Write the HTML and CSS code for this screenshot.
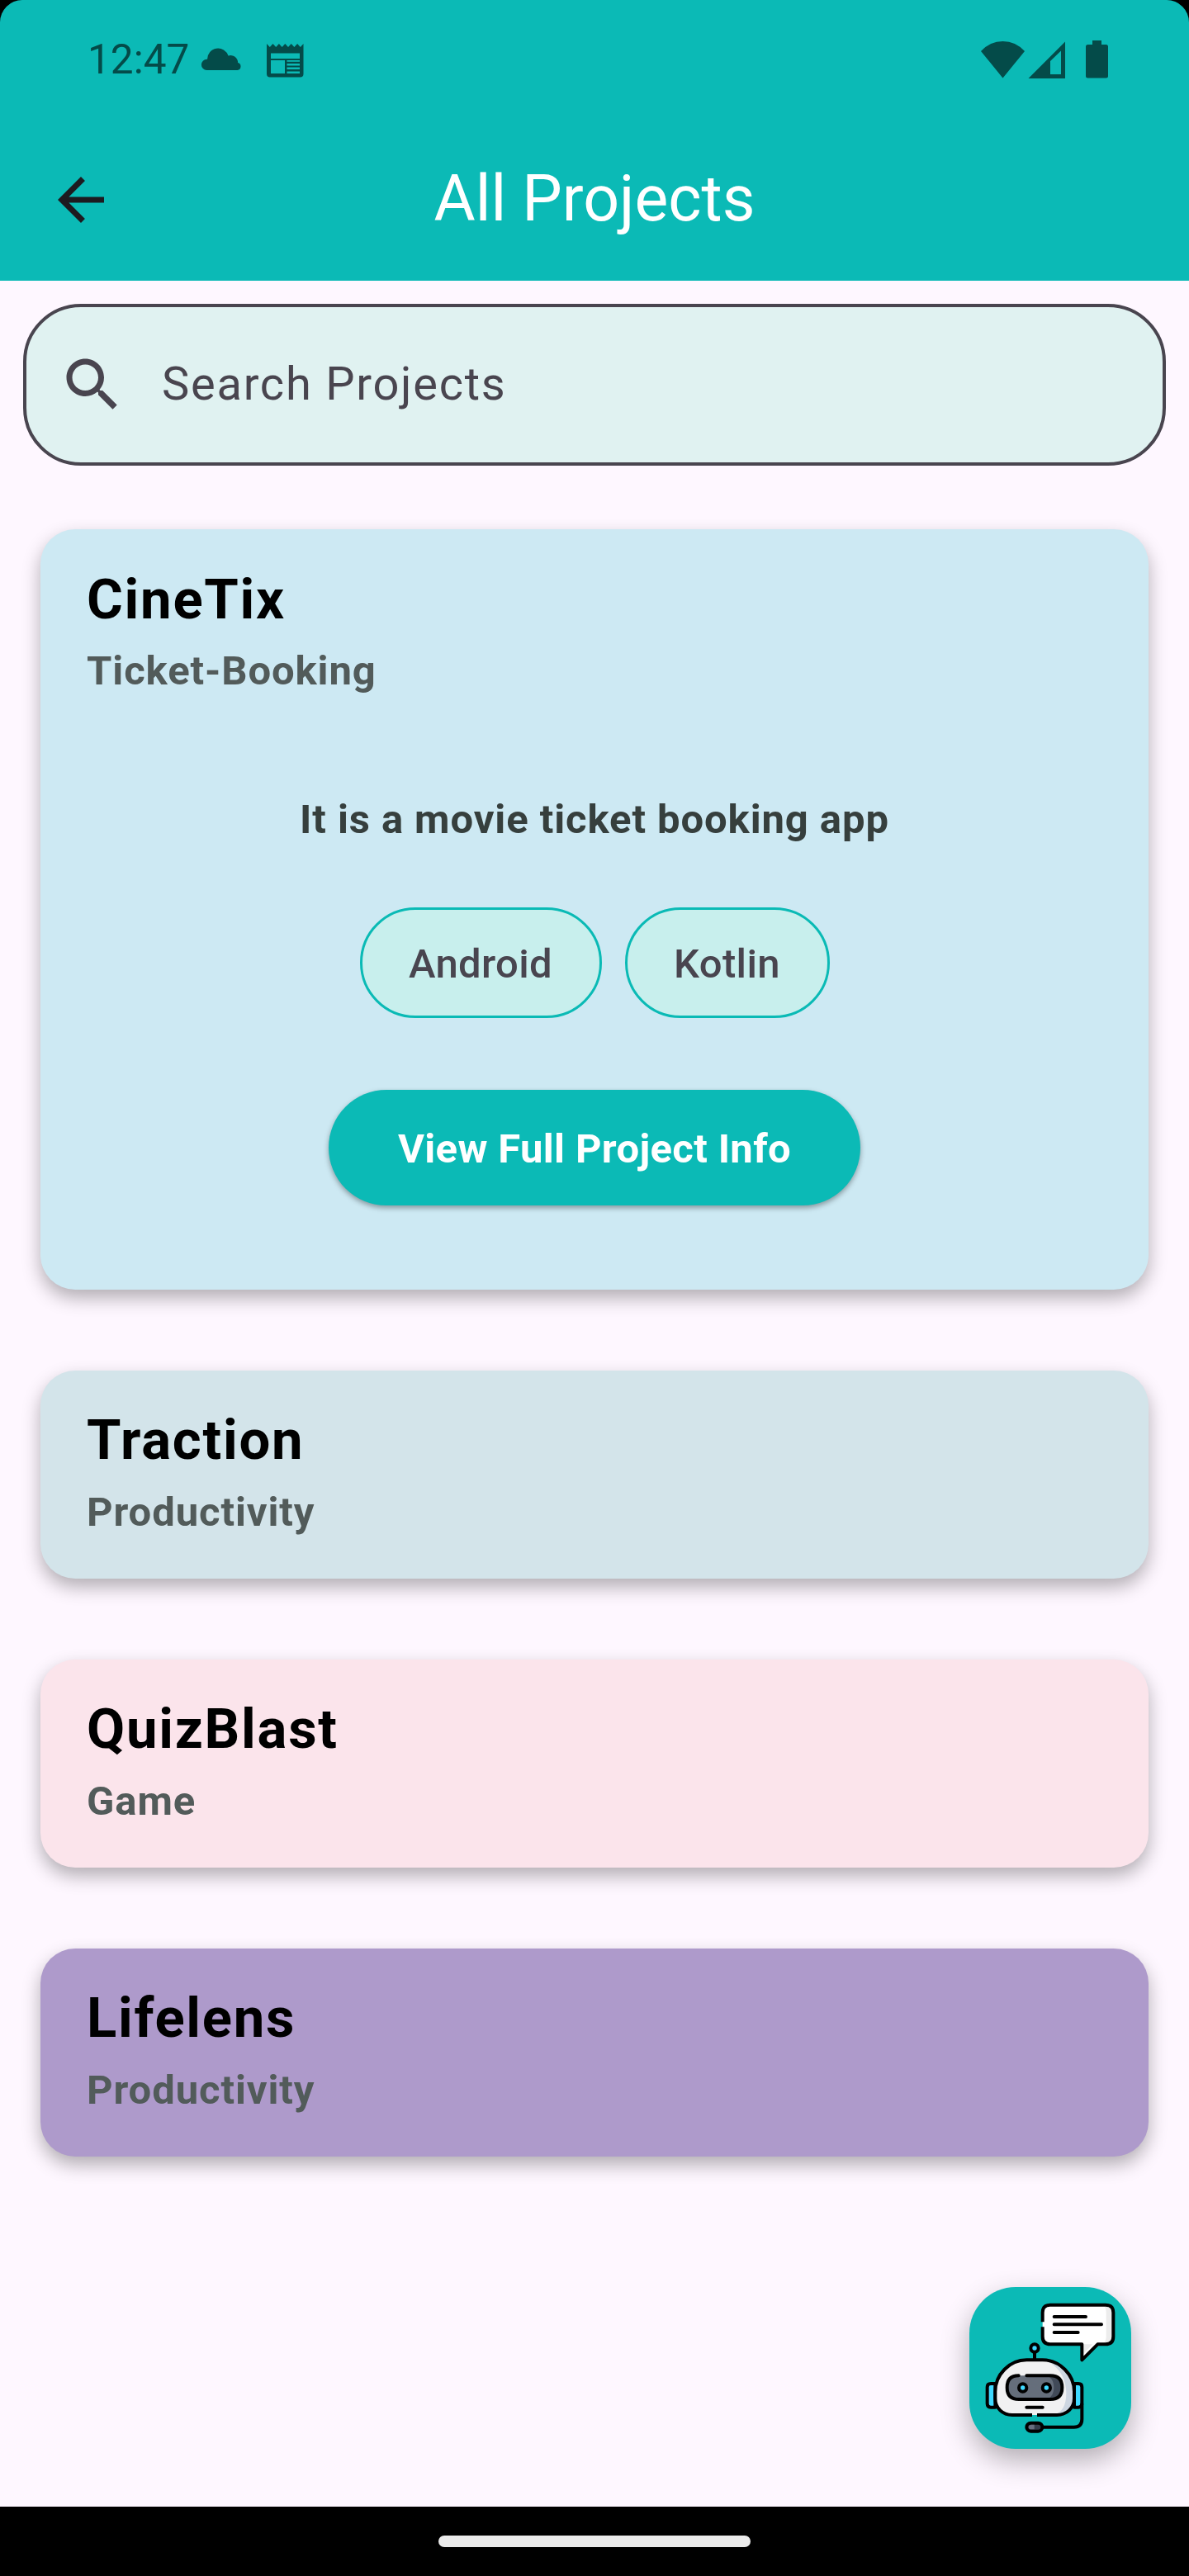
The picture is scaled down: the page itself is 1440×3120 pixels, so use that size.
FILE: index.html
```html
<!DOCTYPE html>
<html lang="en">
<head>
<meta charset="utf-8">
<title>All Projects</title>
<link rel="stylesheet" href="styles.css">
</head>
<body>
<div class="screen">
  <header class="header">
    <div class="status">
      <span class="clock">12:47</span>
      <svg class="status-left" width="135" height="54" viewBox="240 45 135 54" aria-hidden="true">
        <path d="M250.500 85a6.500 6.500 0 0 1 0-13.200q.2 0 .6 0a13 13 0 0 1 25.400-4.200 8.600 8.600 0 0 1 11.600 8.400 4.600 4.600 0 0 1-.6 9z"/>
        <path fill-rule="evenodd" d="M323 53l3.800 4 3.700-4 3.700 4 3.700-4 3.700 4 3.700-4 3.700 4 3.700-4 3.700 4 3.700-4 3.700 4 3.700-4v36.500a4 4 0 0 1-4 4h-36.500a4 4 0 0 1-4-4zM328 64.500v6.500h35v-6.500zM328 73v16h17v-16zM347.500 73v1.700H363V73zm0 4v2.500H363V77zm0 4.500V84H363v-2.500zm0 5V89H363v-2.500z"/>
      </svg>
      <svg class="status-right" width="160" height="54" viewBox="1185 45 160 54" aria-hidden="true">
        <path d="M1188 62Q1199 50 1214.500 50T1241 62L1214.500 94.500z"/>
        <path fill-rule="evenodd" d="M1245.500 95L1290 50.500V95zM1272 74v16h13V61.500z"/>
        <path d="M1323 49h11v5h5.500a2.500 2.500 0 0 1 2.500 2.500v35.500a2.500 2.500 0 0 1-2.500 2.500h-22a2.500 2.500 0 0 1-2.500-2.500V56.500a2.500 2.500 0 0 1 2.500-2.500h5.500z"/>
      </svg>
    </div>
    <div class="appbar">
      <svg class="back" width="84" height="84" viewBox="0 0 24 24" aria-label="Back"><path d="M20 11H7.830l5.590-5.590L12 4l-8 8 8 8 1.410-1.410L7.830 13H20v-2z"/></svg>
      <h1 class="title">All Projects</h1>
    </div>
  </header>

  <main class="content">
    <div class="search">
      <svg width="84" height="84" viewBox="0 0 24 24" aria-hidden="true"><path d="M15.500 14h-.79l-.28-.27C15.410 12.590 16 11.110 16 9.500 16 5.910 13.090 3 9.500 3S3 5.910 3 9.500 5.910 16 9.500 16c1.610 0 3.090-.59 4.230-1.570l.27.28v.79l5 4.990L20.490 19l-4.990-5zm-6 0C7.010 14 5 11.990 5 9.500S7.010 5 9.500 5 14 7.010 14 9.500 11.990 14 9.500 14z"/></svg>
      <span class="placeholder">Search Projects</span>
    </div>

    <div class="list">
      <section class="card card-cinetix">
        <h2 class="name">CineTix</h2>
        <p class="category">Ticket-Booking</p>
        <div class="details">
          <p class="description">It is a movie ticket booking app</p>
          <div class="chips">
            <span class="chip chip-android">Android</span>
            <span class="chip chip-kotlin">Kotlin</span>
          </div>
          <button class="cta" type="button">View Full Project Info</button>
        </div>
      </section>
      <section class="card card-traction">
        <h2 class="name">Traction</h2>
        <p class="category">Productivity</p>
      </section>
      <section class="card card-quizblast">
        <h2 class="name">QuizBlast</h2>
        <p class="category">Game</p>
      </section>
      <section class="card card-lifelens">
        <h2 class="name">Lifelens</h2>
        <p class="category">Productivity</p>
      </section>
    </div>
  </main>

  <button class="fab" type="button" aria-label="Chat assistant">
    <svg width="196" height="196" viewBox="72 90 588 588" fill="none" stroke="#000" stroke-width="12" stroke-linecap="round" stroke-linejoin="round">
      <!-- speech bubble -->
      <path stroke="none" fill="#fff" d="M366 155H567Q595 155 595 183V270Q595 298 567 298H538L481 355V298H366Q338 298 338 270V183Q338 155 366 155z"/>
      <path stroke="none" fill="#ececec" d="M555 155Q569 160 569 183V270Q569 292 553 298H567Q595 298 595 270V183Q595 155 567 155zM487 298H520L487 332z"/>
      <path stroke-linecap="butt" d="M338 217V183Q338 155 366 155H567Q595 155 595 183V270Q595 298 567 298H538L481 355V298H366Q338 298 338 270V235"/>
      <path d="M380 198H495M380 226H552M380 255H467"/>
      <!-- headset -->
      <path fill="#3fd9ff" d="M166 441H150Q137 441 137 454V514Q137 527 150 527H166zM453 441H468Q481 441 481 454V514Q481 527 468 527H453z"/>
      <path d="M481 515V570Q481 599 452 599H340"/>
      <rect x="280" y="584" width="57" height="30" rx="15" fill="#343d4b"/>
      <path stroke="none" fill="#686f80" d="M296 590H308V607H296Q287 606 287 599T296 590z"/>
      <!-- antenna -->
      <path d="M309 330V350"/>
      <circle cx="309" cy="312" r="14" fill="#3fd9ff"/>
      <!-- head -->
      <path stroke="none" fill="#f1f1f2" d="M280 355H338C400 355 453 408 453 470V495C453 530 425 555 390 555H228C193 555 166 530 166 495V470C166 408 218 355 280 355z"/>
      <path stroke="none" fill="#cdd6e1" d="M345 355C400 378 424 425 424 475C424 520 410 546 380 555C425 555 453 530 453 495V470C453 408 400 355 345 355z"/>
      <path stroke-linecap="butt" d="M300 555H228C193 555 166 530 166 495V470C166 408 218 355 280 355H338C400 355 453 408 453 470V495C453 530 425 555 390 555H318"/>
      <rect x="209" y="412" width="200" height="86" rx="43" fill="#656e7b" stroke="none"/>
      <path stroke="none" fill="#414a58" d="M355 412Q379 425 379 455T355 498H366Q409 498 409 455T366 412z"/>
      <path d="M251 412Q209 412 209 455T252 498H366Q409 498 409 455T366 412H280"/>
      <circle cx="266" cy="456" r="14" fill="#3fd9ff"/>
      <circle cx="352" cy="456" r="14" fill="#3fd9ff"/>
      <path d="M280 527H338"/>
    </svg>
  </button>

  <footer class="navbar"><span class="handle"></span></footer>
</div>
</body>
</html>
```
FILE: styles.css
```css
* {
  box-sizing: border-box;
  margin: 0;
}

body {
  background: #000;
  font-family: Roboto, "Liberation Sans", sans-serif;
}

.screen {
  position: relative;
  display: flex;
  flex-direction: column;
  width: 1440px;
  height: 3120px;
  overflow: hidden;
}

.header {
  height: 340px;
  border-radius: 27px 27px 0 0;
  background: #0bbab6;
}

.status {
  display: flex;
  align-items: center;
  height: 144px;
  padding: 0 95px 0 106px;
  color: #044b49;
  fill: #044b49;
}

.clock {
  width: 134px;
  font-size: 49.5px;
  line-height: 60px;
  white-space: nowrap;
}

.status-right {
  margin-left: auto;
}

.appbar {
  display: grid;
  grid-template-columns: 84px 1fr 84px;
  align-items: center;
  height: 196px;
  padding: 0 56px;
}

.back {
  fill: #1d1b20;
}

.title {
  padding-bottom: 2px;
  color: #fff;
  font-size: 77px;
  font-weight: 400;
  line-height: 96px;
  text-align: center;
}

.content {
  flex: 1;
  padding: 28px 28px 0;
  background: #fef7ff;
}

.search {
  display: flex;
  align-items: center;
  gap: 42px;
  height: 196px;
  padding-left: 38px;
  border: 4px solid #49454f;
  border-radius: 70px;
  background: #e0f2f1;
  color: #49454f;
  fill: #49454f;
}

.placeholder {
  padding-bottom: 2px;
  font-size: 56px;
  letter-spacing: 1.75px;
}

.list {
  display: flex;
  flex-direction: column;
  gap: 98px;
  padding: 77px 21px 0;
}

.card {
  height: 252px;
  padding: 44.5px 56px 0;
  border-radius: 42px;
  box-shadow: 0 10px 22px rgba(0, 0, 0, 0.3);
}

.card-cinetix {
  height: 920.5px;
  background: #cde9f3;
}

.card-traction {
  background: #d3e4ea;
}

.card-quizblast {
  background: #fbe4eb;
}

.card-lifelens {
  background: #ae9acb;
}

.name {
  color: #000;
  font-size: 67px;
  font-weight: 700;
  line-height: 80px;
  letter-spacing: 1.75px;
}

.category {
  margin-top: 17.5px;
  color: #525b5a;
  font-size: 49px;
  font-weight: 700;
  line-height: 60px;
  letter-spacing: 0.9px;
}

.details {
  display: flex;
  flex-direction: column;
  align-items: center;
}

.description {
  margin-top: 119.5px;
  color: #363f3d;
  font-size: 49px;
  font-weight: 700;
  line-height: 60px;
  letter-spacing: 0.9px;
}

.chips {
  display: flex;
  gap: 28px;
  margin-top: 76.5px;
}

.chip {
  height: 134px;
  border: 3.5px solid #0abab5;
  border-radius: 67px;
  background: #c8efed;
  color: #49454f;
  font-size: 49px;
  font-weight: 500;
  line-height: 131px;
  letter-spacing: 0.35px;
  text-align: center;
}

.chip-android {
  width: 293px;
}

.chip-kotlin {
  width: 248px;
}

.cta {
  width: 644px;
  height: 140px;
  margin-top: 87px;
  padding: 3px 0 0;
  border: 0;
  border-radius: 70px;
  background: #0bbab6;
  box-shadow: 0 3px 6px rgba(0, 0, 0, 0.35);
  color: #fff;
  font: 700 49px/137px Roboto, "Liberation Sans", sans-serif;
  letter-spacing: 0.35px;
}

/* floating over the list */
.fab {
  position: absolute;
  right: 70px;
  bottom: 154px;
  width: 196px;
  height: 196px;
  padding: 0;
  border: 0;
  border-radius: 56px;
  background: #0bbab6;
  box-shadow: 0 14px 34px rgba(0, 0, 0, 0.3);
}

.fab svg {
  display: block;
}

.navbar {
  display: flex;
  align-items: center;
  justify-content: center;
  height: 84px;
  background: #000;
}

.handle {
  width: 378px;
  height: 14px;
  border-radius: 7px;
  background: #ebebeb;
}
```
